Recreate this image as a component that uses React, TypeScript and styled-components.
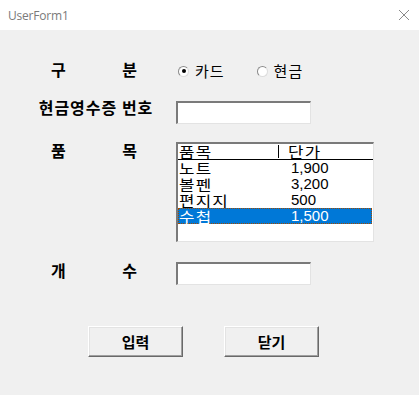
import React, { FC, useState } from 'react';
import styled, { createGlobalStyle } from 'styled-components';

const GlobalStyle = createGlobalStyle`
  html, body {
    margin: 0;
    padding: 0;
    background: #f0f0f0;
  }
`;

interface Item {
  name: string;
  price: string;
}

const items: Item[] = [
  { name: '노트', price: '1,900' },
  { name: '볼펜', price: '3,200' },
  { name: '편지지', price: '500' },
  { name: '수첩', price: '1,500' },
];

const App: FC = () => {
  const [payType, setPayType] = useState('card');
  const [selected, setSelected] = useState(3);

  return (
    <>
      <GlobalStyle />
      <Window>
        <TitleBar>
          <Title>UserForm1</Title>
          <CloseIcon width="12" height="12" viewBox="0 0 12 12">
            <path d="M1 1 L11 11 M11 1 L1 11" stroke="#8a8a8a" strokeWidth="1" />
          </CloseIcon>
        </TitleBar>
        <Body>
          <FormRow $top={31}>
            <LabelCell>
              <SpacedLabel>
                <span>구</span>
                <span>분</span>
              </SpacedLabel>
            </LabelCell>
            <RadioGroup>
              <RadioOption onClick={() => setPayType('card')}>
                <RadioCircle $checked={payType === 'card'} />
                <RadioText>카드</RadioText>
              </RadioOption>
              <RadioOption onClick={() => setPayType('cash')}>
                <RadioCircle $checked={payType === 'cash'} />
                <RadioText>현금</RadioText>
              </RadioOption>
            </RadioGroup>
          </FormRow>

          <FormRow $top={20}>
            <LabelCell>
              <WideLabel>현금영수증 번호</WideLabel>
            </LabelCell>
            <TextBox />
          </FormRow>

          <FormRow $top={18}>
            <LabelCell>
              <SpacedLabel>
                <span>품</span>
                <span>목</span>
              </SpacedLabel>
            </LabelCell>
            <ListBox>
              <ListHeader>
                <HeaderCell>
                  <HeaderText>품목</HeaderText>
                </HeaderCell>
                <HeaderCell $divider>
                  <HeaderText>단가</HeaderText>
                </HeaderCell>
              </ListHeader>
              {items.map((item, i) => (
                <ListRow
                  key={item.name}
                  $selected={i === selected}
                  onClick={() => setSelected(i)}
                >
                  <ItemName>{item.name}</ItemName>
                  <ItemPrice>{item.price}</ItemPrice>
                </ListRow>
              ))}
            </ListBox>
          </FormRow>

          <FormRow $top={20}>
            <LabelCell>
              <SpacedLabel>
                <span>개</span>
                <span>수</span>
              </SpacedLabel>
            </LabelCell>
            <TextBox />
          </FormRow>

          <ButtonBar>
            <PushButton>입력</PushButton>
            <PushButton>닫기</PushButton>
          </ButtonBar>
        </Body>
      </Window>
    </>
  );
};

const Window = styled.div`
  width: 419px;
  height: 395px;
  background: #f0f0f0;
  display: flex;
  flex-direction: column;
  overflow: hidden;
`;

const TitleBar = styled.div`
  height: 30px;
  background: #ffffff;
  display: flex;
  align-items: center;
  justify-content: space-between;
  padding: 0 8px 0 8px;
  box-sizing: border-box;
`;

const Title = styled.span`
  font-family: 'Open Sans', 'Liberation Sans', sans-serif;
  font-size: 12px;
  letter-spacing: -0.2px;
  color: #7a7a7a;
`;

const CloseIcon = styled.svg`
  margin-right: 1px;
`;

const Body = styled.div`
  display: flex;
  flex-direction: column;
  padding-left: 33px;
  font-family: 'Noto Sans CJK KR', sans-serif;
  color: #000;
`;

const FormRow = styled.div<{ $top: number }>`
  display: grid;
  grid-template-columns: 125px 1fr;
  column-gap: 18px;
  align-items: start;
  margin-top: ${p => p.$top}px;
`;

const LabelCell = styled.div`
  display: flex;
  justify-content: center;
  font-size: 16px;
  font-weight: 700;
  line-height: 20px;
`;

const SpacedLabel = styled.div`
  width: 86px;
  display: flex;
  justify-content: space-between;
  margin-left: -3px;
  margin-top: -2px;
`;

const WideLabel = styled.div`
  letter-spacing: 1px;
  margin-top: -4px;
  margin-left: 1px;
  white-space: nowrap;
`;

const RadioGroup = styled.div`
  display: flex;
  align-items: center;
  gap: 32px;
  height: 20px;
  padding-left: 2px;
`;

const RadioOption = styled.label`
  display: flex;
  align-items: center;
  gap: 6px;
  cursor: default;
`;

const RadioCircle = styled.span<{ $checked: boolean }>`
  width: 9px;
  height: 9px;
  border-radius: 50%;
  border: 1px solid;
  border-color: #8a8a8a #dcdcdc #dcdcdc #8a8a8a;
  background: #ffffff;
  display: flex;
  align-items: center;
  justify-content: center;
  &::after {
    content: '';
    width: 4px;
    height: 4px;
    border-radius: 50%;
    background: #000;
    display: ${p => (p.$checked ? 'block' : 'none')};
  }
`;

const RadioText = styled.span`
  font-size: 15px;
  letter-spacing: 1px;
  line-height: 20px;
`;

const TextBox = styled.div`
  width: 135px;
  height: 23px;
  box-sizing: border-box;
  background: #ffffff;
  border-top: 2px solid #7a7a7a;
  border-left: 2px solid #7a7a7a;
  border-right: 1px solid #e3e3e3;
  border-bottom: 1px solid #e3e3e3;
`;

const ListBox = styled.div`
  width: 198px;
  height: 100px;
  box-sizing: border-box;
  background: #ffffff;
  border-top: 2px solid #7a7a7a;
  border-left: 2px solid #7a7a7a;
  border-right: 1px solid #e3e3e3;
  border-bottom: 1px solid #e3e3e3;
  display: flex;
  flex-direction: column;
`;

const ListHeader = styled.div`
  display: grid;
  grid-template-columns: 100px 1fr;
  height: 16px;
  box-sizing: border-box;
  border-bottom: 1px solid #000;
  align-items: center;
`;

const HeaderCell = styled.div<{ $divider?: boolean }>`
  display: flex;
  align-items: center;
  height: 13px;
  line-height: 13px;
  padding-left: ${p => (p.$divider ? '9px' : '1px')};
  border-left: ${p => (p.$divider ? '1px solid #000' : 'none')};
`;

const HeaderText = styled.span`
  font-size: 14px;
  letter-spacing: 1px;
  line-height: 13px;
  transform: scaleX(1.2);
  transform-origin: left center;
`;

const ListRow = styled.div<{ $selected: boolean }>`
  display: grid;
  grid-template-columns: 112px 1fr;
  height: 16px;
  box-sizing: border-box;
  align-items: center;
  background: ${p => (p.$selected ? '#0078d7' : 'transparent')};
  color: ${p => (p.$selected ? '#ffffff' : '#000000')};
  border: 1px dotted ${p => (p.$selected ? '#a04a00' : 'transparent')};
  margin-right: 1px;
`;

const ItemName = styled.span`
  font-size: 14px;
  letter-spacing: 1px;
  line-height: 14px;
  transform: scaleX(1.2);
  transform-origin: left center;
`;

const ItemPrice = styled.span`
  font-family: 'Liberation Sans', sans-serif;
  font-size: 15px;
  line-height: 14px;
`;

const ButtonBar = styled.div`
  display: flex;
  gap: 41px;
  margin-top: 41px;
  padding-left: 55px;
`;

const PushButton = styled.button`
  width: 95px;
  height: 31px;
  box-sizing: border-box;
  background: #f0f0f0;
  border-top: 1px solid #ffffff;
  border-left: 1px solid #ffffff;
  border-right: 1px solid #696969;
  border-bottom: 1px solid #696969;
  box-shadow: inset -1px -1px 0 #a0a0a0, inset 1px 1px 0 #e3e3e3;
  font-family: 'Noto Sans CJK KR', sans-serif;
  font-size: 15px;
  font-weight: 700;
  color: #000;
  padding: 0;
`;

export default App;
